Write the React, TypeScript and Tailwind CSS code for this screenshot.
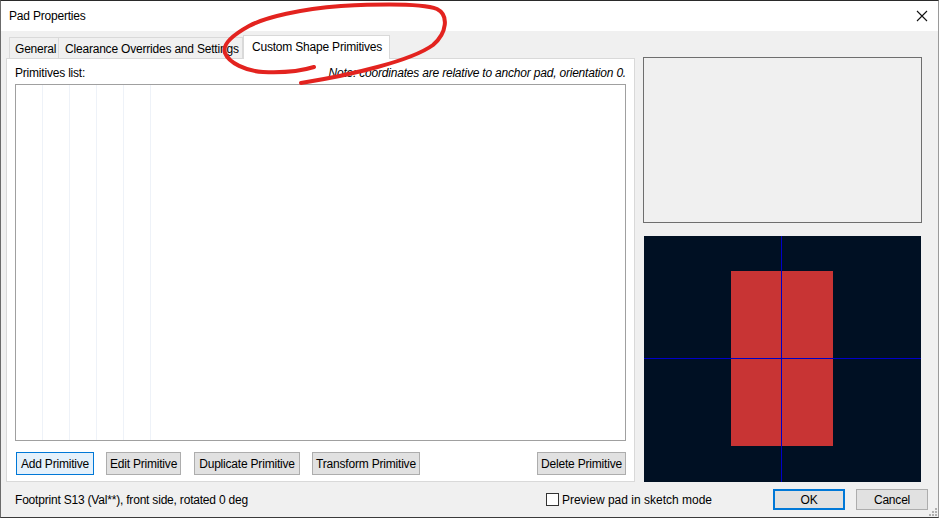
import React from "react";

const tabs = ["General", "Clearance Overrides and Settings"];
const actions = ["Add Primitive", "Edit Primitive", "Duplicate Primitive", "Transform Primitive"];

function Btn({ label, focused, className = "" }: { label: string; focused?: boolean; className?: string }) {
  return (
    <div
      className={
        "h-[23px] flex items-center justify-center text-[12px] text-black border whitespace-nowrap " +
        (focused ? "bg-[#e5f1fb] border-[#0078d7] " : "bg-[#e1e1e1] border-[#adadad] ") +
        className
      }
    >
      {label}
    </div>
  );
}

export default function App() {
  return (
    <div
      className="relative w-[939px] h-[518px] overflow-hidden flex flex-col bg-[#f0f0f0] border-t border-l border-b border-r border-t-[#2a2a2a] border-l-[#6b6b6b] border-b-[#3a3a3a] border-r-[#9a9a9a] text-black tracking-[-0.2px]"
      style={{ fontFamily: '"Liberation Sans", Arial, sans-serif' }}
    >
      {/* Title bar */}
      <div className="h-[30px] bg-white flex items-center justify-between pl-[8px] pr-[8px] shrink-0">
        <span className="text-[12px]">Pad Properties</span>
        <svg width="12" height="12" viewBox="0 0 12 12" className="mr-[2px]">
          <path d="M1 1 L11 11 M11 1 L1 11" stroke="#111" strokeWidth="1.1" />
        </svg>
      </div>

      <div className="flex flex-1 min-h-0">
        {/* Left column: tabs */}
        <div className="ml-[5px] w-[629px] flex flex-col">
          <div className="h-[27px] flex items-end pl-[3px] shrink-0">
            <div className="h-[21px] px-[5px] pt-[1px] flex items-center text-[12px] border border-b-0 border-[#d9d9d9] bg-[#f0f0f0] w-[50px] whitespace-nowrap">
              {tabs[0]}
            </div>
            <div className="h-[21px] px-[6px] pt-[1px] flex items-center text-[12px] border border-b-0 border-l-0 border-[#d9d9d9] bg-[#f0f0f0] w-[184px] whitespace-nowrap overflow-hidden">
              {tabs[1]}
            </div>
            <div className="relative z-10 h-[24px] -mb-px px-[8px] flex items-center text-[12px] border border-b-0 border-[#d9d9d9] bg-white w-[147px] whitespace-nowrap pb-[1px]">
              Custom Shape Primitives
            </div>
          </div>
          <div className="flex-1 bg-white border border-[#d9d9d9] flex flex-col px-[8px] pb-[6px]">
            <div className="h-[25px] flex items-center justify-between text-[12px] pt-[3px] whitespace-nowrap">
              <span>Primitives list:</span>
              <span className="italic">Note: coordinates are relative to anchor pad, orientation 0.</span>
            </div>
            <div className="h-[357px] border border-[#a0a0a0] flex">
              {[0, 1, 2, 3, 4].map((i) => (
                <div key={i} className="w-[27px] h-full border-r border-[#eef2f8]" />
              ))}
            </div>
            <div className="flex items-center mt-[11px] ml-[1px]">
              <Btn label={actions[0]} focused className="w-[78px]" />
              <Btn label={actions[1]} className="w-[75px] ml-[12px]" />
              <Btn label={actions[2]} className="w-[106px] ml-[13px]" />
              <Btn label={actions[3]} className="w-[108px] ml-[12px]" />
              <Btn label="Delete Primitive" className="w-[89px] ml-auto" />
            </div>
          </div>
        </div>

        {/* Right column: previews */}
        <div className="ml-[8px] w-[279px] flex flex-col pt-[26px]">
          <div className="h-[166px] border border-[#6e6e6e] bg-[#f0f0f0]" />
          <div className="mt-[13px] ml-[1px] w-[277px] flex-1 bg-[#001023]">
            <svg width="277" height="246" viewBox="0 0 277 246" className="block">
              <rect x="87" y="35" width="102" height="175" fill="#c83434" />
              <line x1="137.5" y1="0" x2="137.5" y2="246" stroke="#0000c8" strokeWidth="1" />
              <line x1="0" y1="122.5" x2="277" y2="122.5" stroke="#0000c8" strokeWidth="1" />
            </svg>
          </div>
        </div>
      </div>

      {/* Footer */}
      <div className="h-[35px] flex items-center shrink-0 text-[12px] pl-[14px] pr-[10px] relative whitespace-nowrap">
        <span>Footprint S13 (Val**), front side, rotated 0 deg</span>
        <div className="ml-auto flex items-center">
          <div className="w-[13px] h-[13px] border border-[#333] bg-white" />
          <span className="ml-[3px] tracking-normal">Preview pad in sketch mode</span>
        </div>
        <div className="ml-[61px] w-[72px] h-[21px] border-2 border-[#0078d7] bg-[#e1e1e1] flex items-center justify-center">
          OK
        </div>
        <div className="ml-[11px] w-[72px] h-[21px] border border-[#adadad] bg-[#e1e1e1] flex items-center justify-center">
          Cancel
        </div>
        <svg width="8" height="8" viewBox="0 0 8 8" className="absolute right-[1px] bottom-[1px]">
          {[
            [6, 0],
            [3, 3],
            [6, 3],
            [0, 6],
            [3, 6],
            [6, 6],
          ].map(([x, y], i) => (
            <rect key={i} x={x} y={y} width="2" height="2" fill="#b0b0b0" />
          ))}
        </svg>
      </div>

      {/* Red hand-drawn annotation */}
      <svg width="939" height="518" className="absolute left-0 top-0 pointer-events-none" viewBox="0 0 939 518">
        <path
          d="M300 82 C350 74 410 60 432 44 C446 32 448 14 436 8 C420 2 380 3 340 5 C300 8 265 16 248 25 C230 35 221 44 224 52 C228 62 245 70 262 71 C282 72 300 70 313 66"
          fill="none"
          stroke="#e3231f"
          strokeWidth="4"
          strokeLinecap="round"
          strokeLinejoin="round"
        />
      </svg>
    </div>
  );
}
